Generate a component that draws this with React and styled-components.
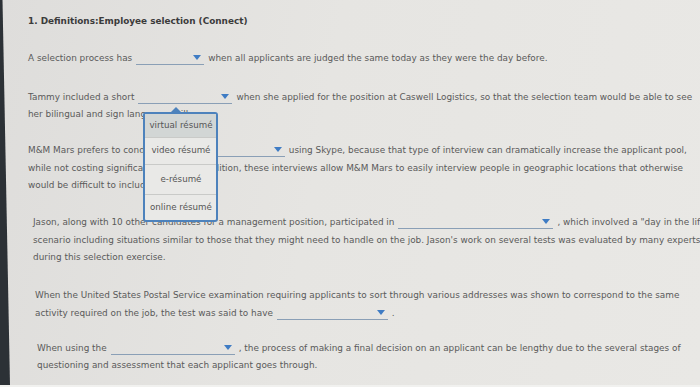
import React from 'react';
import styled, { createGlobalStyle } from 'styled-components';

const GlobalStyle = createGlobalStyle`
  html, body {
    margin: 0;
    padding: 0;
  }
  body {
    width: 700px;
    height: 387px;
    overflow: hidden;
    background: #e5e4e1;
    font-family: "DejaVu Sans", Verdana, sans-serif;
  }
`;

const Screen = styled.div`
  display: flex;
  width: 700px;
  height: 387px;
  overflow: hidden;
  background: linear-gradient(100deg, #dedddb 0%, #e6e5e2 45%, #e9e8e5 100%);
  border-bottom: 2px solid #f1f1ef;
  box-sizing: border-box;
`;

const Bezel = styled.div`
  flex: 0 0 10px;
  background: #2c3136;
  clip-path: polygon(0 0, 25% 0, 100% 100%, 0 100%);
`;

const Content = styled.main`
  flex: 1;
  min-width: 0;
  overflow: hidden;
  padding: 13px 0 0 18px;
`;

const Title = styled.h1`
  margin: 0 0 19.5px;
  font-size: 8.9px;
  line-height: 17.5px;
  font-weight: 700;
  color: #3b3b3b;
  white-space: nowrap;
`;

const Question = styled.p`
  margin: 0 0 ${p => p.$gap ?? 18.5}px;
  padding-left: ${p => p.$indent || 0}px;
  font-size: 8.9px;
  line-height: 17.5px;
  color: #5a5a5a;
  white-space: nowrap;
`;

const Blank = styled.span`
  position: relative;
  display: inline-block;
  box-sizing: border-box;
  width: ${p => p.$w}px;
  height: 11px;
  margin: 0 4px;
  border-bottom: 1.5px solid #8a9fb6;
  vertical-align: -4px;
`;

const Arrow = styled.span`
  position: absolute;
  right: 3px;
  top: 1px;
  width: 0;
  height: 0;
  border-left: 4px solid transparent;
  border-right: 4px solid transparent;
  border-top: 5px solid #3f7cc4;
`;

const Menu = styled.ul`
  position: absolute;
  top: calc(100% + 9px);
  left: 5px;
  z-index: 2;
  width: 75px;
  margin: 0;
  padding: 0;
  list-style: none;
  background: #e9e9e7;
  border: 2px solid #4d82bc;
  border-radius: 3px;
  box-sizing: border-box;

  &::before {
    content: "";
    position: absolute;
    top: -7px;
    left: 26px;
    border-left: 5px solid transparent;
    border-right: 5px solid transparent;
    border-bottom: 5px solid #4d82bc;
  }
`;

const Option = styled.li`
  display: flex;
  align-items: center;
  justify-content: center;
  height: ${p => p.$h}px;
  font-size: 8.7px;
  color: #555;
  white-space: nowrap;
  background: ${p => (p.$active ? '#d2d6d5' : 'transparent')};
  border-top: ${p => (p.$first ? 'none' : '1px solid #c9cac8')};
  line-height: 1;
`;

const options = [
  { label: 'virtual résumé', h: 23, active: true },
  { label: 'video résumé', h: 26 },
  { label: 'e-résumé', h: 29 },
  { label: 'online résumé', h: 25 },
];

const Dropdown = ({ w, open }) => (
  <Blank $w={w}>
    <Arrow />
    {open && (
      <Menu>
        {options.map((o, i) => (
          <Option key={o.label} $h={o.h} $active={o.active} $first={i === 0}>
            {o.label}
          </Option>
        ))}
      </Menu>
    )}
  </Blank>
);

export default function App() {
  return (
    <>
      <GlobalStyle />
      <Screen>
        <Bezel />
        <Content>
          <Title>1. Definitions:Employee selection (Connect)</Title>

          <Question $gap={21}>
            A selection process has<Dropdown w={68} />when all applicants are judged the same today as they were the day before.
          </Question>

          <Question>
            Tammy included a short<Dropdown w={94} open />when she applied for the position at Caswell Logistics, so that the selection team would be able to see
            <br />
            her bilingual and sign language skills.
          </Question>

          <Question $gap={19.5}>
            M&amp;M Mars prefers to conduct<Dropdown w={122} />using Skype, because that type of interview can dramatically increase the applicant pool,
            <br />
            while not costing significantly more. In addition, these interviews allow M&amp;M Mars to easily interview people in geographic locations that otherwise
            <br />
            would be difficult to include.
          </Question>

          <Question $indent={5} $gap={20.5}>
            Jason, along with 10 other candidates for a management position, participated in<Dropdown w={155} />, which involved a "day in the life"
            <br />
            scenario including situations similar to those that they might need to handle on the job. Jason's work on several tests was evaluated by many experts
            <br />
            during this selection exercise.
          </Question>

          <Question $indent={7} $gap={17.5}>
            When the United States Postal Service examination requiring applicants to sort through various addresses was shown to correspond to the same
            <br />
            activity required on the job, the test was said to have<Dropdown w={111} />.
          </Question>

          <Question $indent={9}>
            When using the<Dropdown w={124} />, the process of making a final decision on an applicant can be lengthy due to the several stages of
            <br />
            questioning and assessment that each applicant goes through.
          </Question>
        </Content>
      </Screen>
    </>
  );
}
